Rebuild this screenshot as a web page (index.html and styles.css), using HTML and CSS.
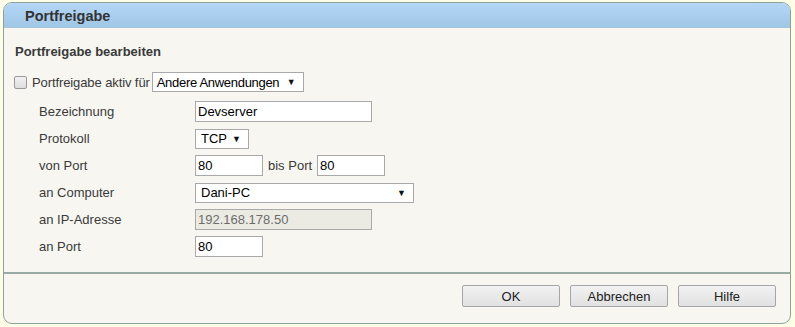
FILE: index.html
```html
<!DOCTYPE html>
<html lang="de">
<head>
<meta charset="utf-8">
<title>Portfreigabe</title>
<link rel="stylesheet" href="styles.css">
</head>
<body>
<div class="panel">
  <div class="panel-head">Portfreigabe</div>
  <div class="panel-body">
    <h2 class="section-title">Portfreigabe bearbeiten</h2>
    <div class="active-row">
      <span class="checkbox"></span>
      <span class="active-label">Portfreigabe aktiv für</span>
      <span class="select select-app"><span class="tight">Andere Anwendungen</span><span class="arrow">▼</span></span>
    </div>
    <div class="form">
      <div class="row"><span class="label">Bezeichnung</span><span class="input w-wide">Devserver</span></div>
      <div class="row"><span class="label">Protokoll</span><span class="select select-proto">TCP<span class="arrow">▼</span></span></div>
      <div class="row"><span class="label">von Port</span><span class="input w-port">80</span><span class="bis">bis Port</span><span class="input w-port">80</span></div>
      <div class="row"><span class="label">an Computer</span><span class="select select-pc">Dani-PC<span class="arrow">▼</span></span></div>
      <div class="row"><span class="label">an IP-Adresse</span><span class="input w-wide disabled">192.168.178.50</span></div>
      <div class="row"><span class="label">an Port</span><span class="input w-port">80</span></div>
    </div>
  </div>
  <div class="panel-foot">
    <button class="btn">OK</button>
    <button class="btn">Abbrechen</button>
    <button class="btn">Hilfe</button>
  </div>
</div>
</body>
</html>
```
FILE: styles.css
```css
html, body {
  margin: 0;
  padding: 0;
  background: #fefde8;
}
body {
  padding: 2px 0 0 3px;
  font-family: Arial, "Liberation Sans", sans-serif;
  font-size: 13px;
  color: #3a3a3a;
}
.panel {
  width: 786px;
  height: 320px;
  border: 1px solid #8ea39a;
  border-radius: 9px;
  background: #f7f6f1;
  display: flex;
  flex-direction: column;
  overflow: hidden;
}
.panel-head {
  height: 25px;
  box-sizing: border-box;
  background: linear-gradient(#b3d6f5, #a1c7e6);
  border-bottom: 1px solid #a8c4dc;
  font-weight: bold;
  font-size: 14.5px;
  color: #333;
  padding: 5px 0 0 21px;
}
.panel-body {
  flex: 1;
  padding: 0 0 0 11px;
}
.section-title {
  margin: 16px 0 0 0;
  font-size: 13px;
  font-weight: bold;
  color: #3a3a3a;
  height: 15px;
  line-height: 15px;
}
.active-row {
  display: flex;
  align-items: center;
  margin-top: 13px;
  height: 20px;
}
.checkbox {
  width: 11px;
  height: 11px;
  border: 1px solid #9a9a9a;
  border-radius: 2px;
  background: linear-gradient(#f1f1f1, #dedede);
  margin: 0 5px 0 -1px;
}
.active-label {
  margin-right: 2px;
  letter-spacing: -0.1px;
}
.select {
  display: flex;
  align-items: center;
  justify-content: space-between;
  box-sizing: border-box;
  height: 20px;
  border: 1px solid #a9a9a9;
  background: #fff;
  color: #000;
  padding: 0 7px 0 5px;
}
.tight {
  letter-spacing: -0.3px;
}
.select-app { padding-left: 4px; }
.arrow {
  font-size: 9px;
  color: #111;
}
.select-app { width: 152px; }
.select-proto { width: 54px; }
.select-pc { width: 219px; }
.form {
  padding: 6px 0 0 24px;
}
.row {
  display: flex;
  align-items: center;
  height: 27px;
}
.label {
  width: 156px;
}
.input {
  box-sizing: border-box;
  height: 21px;
  border: 1px solid #a9a9a9;
  background: #fff;
  color: #000;
  padding: 0 2px;
  display: flex;
  align-items: center;
}
.input.disabled {
  background: #ebebe4;
  color: #6d6d6d;
}
.w-wide { width: 177px; }
.w-port { width: 68px; }
.bis { margin: 0 5px 0 5px; }
.panel-foot {
  height: 51px;
  border-top: 2px solid #97aaa4;
  display: flex;
  justify-content: flex-end;
  align-items: flex-start;
  gap: 10px;
  padding: 11px 14px 0 0;
  box-sizing: border-box;
}
.btn {
  width: 98px;
  height: 22px;
  border: 1px solid #a6a6a6;
  border-radius: 2px;
  background: linear-gradient(#f2f2f2, #e1e1e1);
  font-family: Arial, "Liberation Sans", sans-serif;
  font-size: 13px;
  color: #222;
  padding: 0;
}
```
